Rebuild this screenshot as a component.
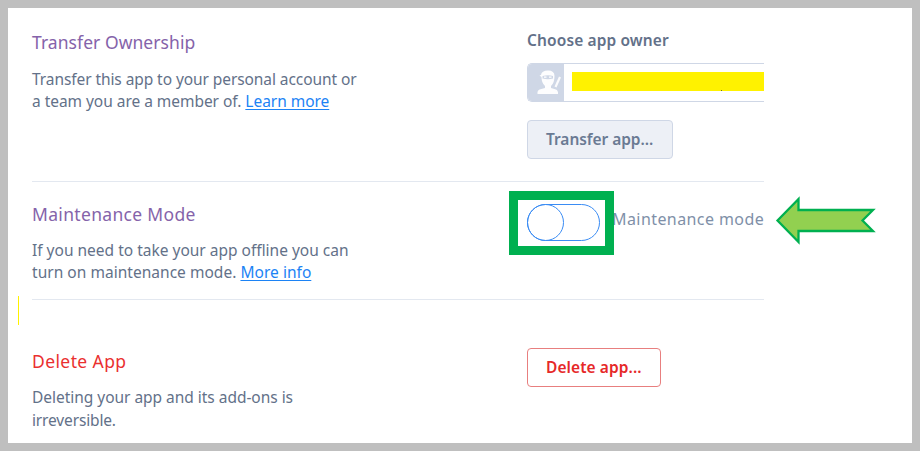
<script>
  const text = {
    transfer: ['Transfer this app to your personal account or', 'a team you are a member of.'],
    maintenance: ['If you need to take your app offline you can', 'turn on maintenance mode.'],
    remove: ['Deleting your app and its add-ons is', 'irreversible.']
  };
</script>

<main class="frame">
  <div class="settings">
    <section class="row transfer">
      <div class="info">
        <h2><span>Transfer Ownership</span></h2>
        <p>
          <span class="t1">{text.transfer[0]}</span><br />
          <span class="t2">{text.transfer[1]} <a href="#transfer">Learn more</a></span>
        </p>
      </div>
      <div class="control">
        <span class="label">Choose app owner</span>
        <div class="owner">
          <div class="avatar">
            <svg width="26" height="28" viewBox="0 0 26 28" fill="#fff">
              <path d="M5 6Q5.500 1.500 12 1.500Q18.500 1.500 18.500 7Q18.500 14 15 17V19L20 20.500Q22.500 22 22 25H1.500Q1 21.500 3.500 20.500L9 19V17Q5.500 14 5.500 8L3.500 6.500Z" opacity=".95" />
              <path d="M23 7.500L25 8.500L20.500 18.500L18.500 17.500Z" opacity=".9" />
              <path d="M6.500 7Q12 5.500 17 7V9.500Q12 11 6.500 9.500Z" fill="#cfd7e6" />
              <path d="M8 7.600h2.500v1.200H8zM13 7.600h2.500v1.200H13z" />
            </svg>
          </div>
          <div class="redaction"></div>
        </div>
        <button class="neutral"><span>Transfer app...</span></button>
      </div>
    </section>

    <section class="row maintenance">
      <div class="info">
        <h2><span>Maintenance Mode</span></h2>
        <p>
          <span class="m1">{text.maintenance[0]}</span><br />
          <span class="m2">{text.maintenance[1]} <a href="#maintenance">More info</a></span>
        </p>
      </div>
      <div class="control switch">
        <div class="toggle"><i></i></div>
        <span class="mode">Maintenance mode</span>
      </div>
    </section>

    <section class="row remove">
      <div class="info">
        <h2><span>Delete App</span></h2>
        <p>
          <span class="d1">{text.remove[0]}</span><br />
          <span class="d2">{text.remove[1]}</span>
        </p>
      </div>
      <div class="control">
        <button class="danger"><span>Delete app...</span></button>
      </div>
    </section>
  </div>

  <div class="highlight"></div>
  <div class="marker"></div>
  <svg class="arrow" width="104" height="52" viewBox="0 0 104 52">
    <path d="M2.500 26.500L23.500 5V16H98L87.500 26.500L98 37H23.500V48Z" fill="#92d050" stroke="#00b050" stroke-width="2.300" />
  </svg>
</main>

<style>
  :global(body) { margin: 0; background: #fff; }
  .frame {
    position: relative;
    box-sizing: border-box;
    width: 920px;
    height: 451px;
    border: 8px solid #bfbfbf;
    background: #fff;
    overflow: hidden;
    font-family: "Noto Sans", "Open Sans", sans-serif;
    color: #637189;
  }
  .settings { width: 732px; margin-left: 24px; }
  .row {
    display: flex;
    box-sizing: border-box;
    border-bottom: 1px solid #e3e8f0;
  }
  .transfer { height: 174px; padding-top: 22px; }
  .maintenance { height: 118px; padding-top: 20px; }
  .remove { padding-top: 49px; border-bottom: 0; }
  .info { width: 495px; flex: none; }
  .control { flex: 1; min-width: 0; }
  h2 {
    margin: 0;
    height: 24px;
    font-size: 17.500px;
    line-height: 24px;
    font-weight: 400;
    letter-spacing: 0.06px;
    color: #8563aa;
  }
  .maintenance h2 { letter-spacing: 0.32px; }
  .remove h2 { color: #ea3030; letter-spacing: 0.4px; }
  p {
    margin: 13px 0 0;
    font-size: 15.500px;
    line-height: 22.500px;
    white-space: nowrap;
  }
  .transfer p { margin-top: 14px; line-height: 22px; }
  .maintenance p { line-height: 22px; }
  .t1 { letter-spacing: -0.08px; }
  .t2 { letter-spacing: -0.04px; }
  .m2 { letter-spacing: 0.03px; }
  .d1 { letter-spacing: -0.03px; }
  .d2 { letter-spacing: -0.15px; }
  a { color: #1c83f5; text-decoration: underline; text-underline-offset: 2px; }
  .label {
    display: block;
    height: 22px;
    margin-top: -1px;
    font-size: 15.500px;
    line-height: 22px;
    font-weight: 600;
    letter-spacing: 0.12px;
  }
  .owner {
    position: relative;
    box-sizing: border-box;
    height: 39px;
    margin-top: 12px;
    border: 1px solid #cfd7e6;
    border-right: 0;
    border-radius: 5px 0 0 5px;
    overflow: hidden;
  }
  .avatar {
    display: flex;
    align-items: center;
    justify-content: center;
    box-sizing: border-box;
    width: 36px;
    height: 37px;
    padding-left: 5px;
    background: #cfd7e6;
  }
  .redaction {
    position: absolute;
    left: 44px;
    right: 0;
    top: 8px;
    height: 19px;
    background: #fff200;
  }
  .redaction::after {
    content: "";
    position: absolute;
    left: 149px;
    top: 18px;
    width: 1px;
    height: 1px;
    background: #6b6b30;
  }
  button {
    display: block;
    box-sizing: border-box;
    height: 39px;
    padding: 0 0 1px 18px;
    border-radius: 4px;
    font: 600 15.500px/36px "Noto Sans", sans-serif;
    text-align: left;
    white-space: nowrap;
  }
  .neutral {
    width: 146px;
    margin-top: 18px;
    color: #6a7a93;
    background: #edf0f6;
    border: 1px solid #cfd7e6;
    letter-spacing: -0.05px;
  }
  .danger {
    width: 134px;
    margin-top: -1px;
    color: #e62828;
    background: #fff;
    border: 1px solid #e87f7f;
    letter-spacing: 0.08px;
  }
  .switch { display: flex; align-items: flex-start; white-space: nowrap; }
  .toggle {
    box-sizing: border-box;
    flex: none;
    width: 73px;
    height: 37px;
    margin-top: 2px;
    border: 1px solid #3a8cf4;
    border-radius: 19px;
  }
  .toggle i {
    display: block;
    box-sizing: border-box;
    width: 37px;
    height: 37px;
    margin: -1px;
    border: 1px solid #3a8cf4;
    border-radius: 50%;
  }
  .mode {
    margin: 6px 0 0 12px;
    font-size: 16px;
    line-height: 22px;
    letter-spacing: 0.42px;
    color: #8090a8;
  }
  .highlight {
    position: absolute;
    box-sizing: border-box;
    left: 501px;
    top: 183px;
    width: 105px;
    height: 64px;
    border: 9px solid #00b050;
  }
  .marker {
    position: absolute;
    left: 10px;
    top: 288px;
    width: 1px;
    height: 29px;
    background: #fff200;
  }
  .arrow { position: absolute; left: 767px; top: 186px; }
</style>
